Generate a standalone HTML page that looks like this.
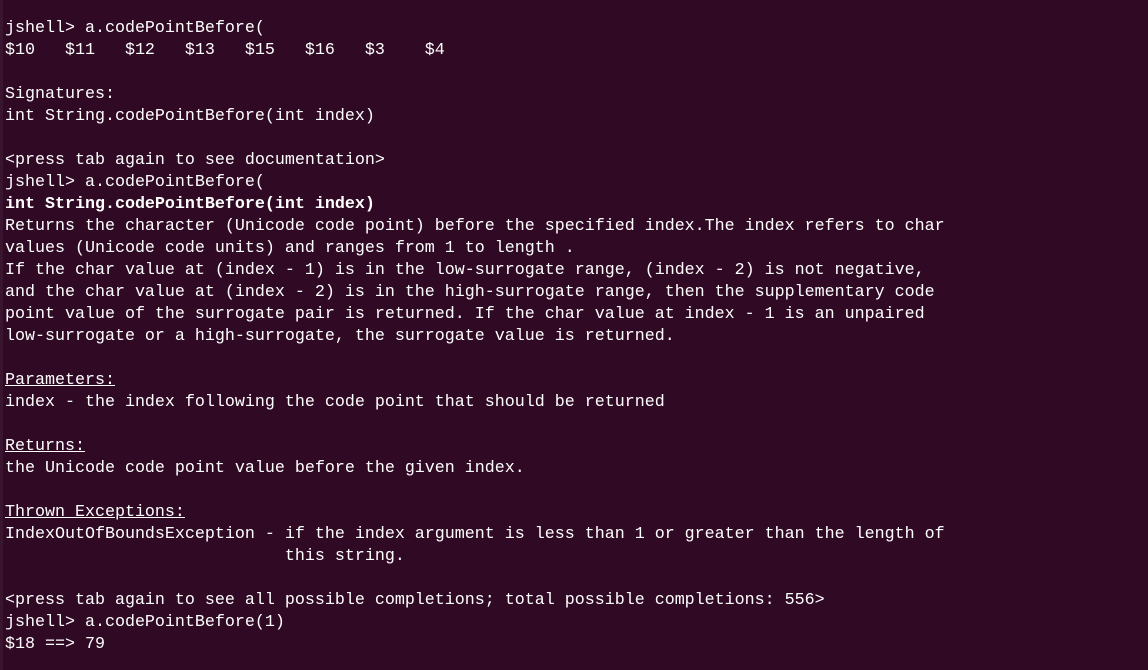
<!DOCTYPE html>
<html><head><style>
html,body{margin:0;padding:0;}
body{width:1148px;height:670px;background:#300a24;overflow:hidden;position:relative;}
.strip{position:absolute;left:0;top:0;width:3px;height:670px;background:#3a1530;}
pre{position:absolute;left:5px;top:18px;margin:0;font-family:"Liberation Mono",monospace;font-size:16.67px;line-height:22px;color:#ffffff;white-space:pre;}
b{font-weight:bold;}
u{text-decoration:underline;}
</style></head><body><div class="strip"></div><pre>jshell&gt; a.codePointBefore(
$10   $11   $12   $13   $15   $16   $3    $4

Signatures:
int String.codePointBefore(int index)

&lt;press tab again to see documentation&gt;
jshell&gt; a.codePointBefore(
<b>int String.codePointBefore(int index)</b>
Returns the character (Unicode code point) before the specified index.The index refers to char
values (Unicode code units) and ranges from 1 to length .
If the char value at (index - 1) is in the low-surrogate range, (index - 2) is not negative,
and the char value at (index - 2) is in the high-surrogate range, then the supplementary code
point value of the surrogate pair is returned. If the char value at index - 1 is an unpaired
low-surrogate or a high-surrogate, the surrogate value is returned.

<u>Parameters:</u>
index - the index following the code point that should be returned

<u>Returns:</u>
the Unicode code point value before the given index.

<u>Thrown Exceptions:</u>
IndexOutOfBoundsException - if the index argument is less than 1 or greater than the length of
                            this string.

&lt;press tab again to see all possible completions; total possible completions: 556&gt;
jshell&gt; a.codePointBefore(1)
$18 ==&gt; 79</pre></body></html>
